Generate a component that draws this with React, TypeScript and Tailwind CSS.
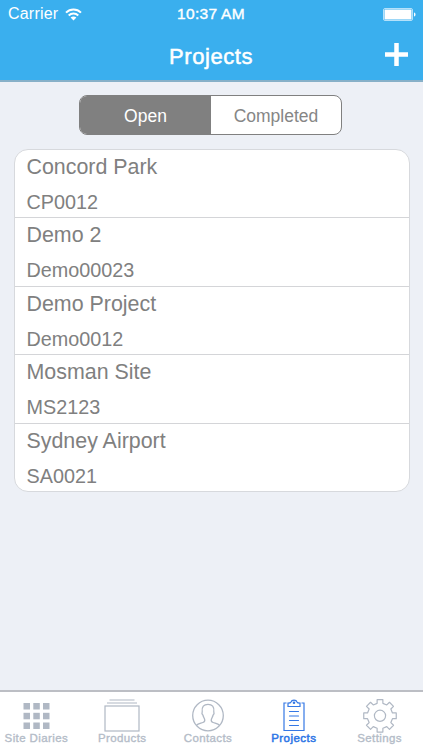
import React from 'react';

const projects = [
    { name: 'Concord Park', code: 'CP0012' },
    { name: 'Demo 2', code: 'Demo00023' },
    { name: 'Demo Project', code: 'Demo0012' },
    { name: 'Mosman Site', code: 'MS2123' },
    { name: 'Sydney Airport', code: 'SA0021' },
];

function StatusBar () {
    return (
        <div className="flex justify-between items-center h-7 pl-2 pr-[7px] text-white">
            <div className="flex items-center w-[140px] gap-[7px]">
                <span className="text-[16px] leading-7 tracking-[0.2px]">Carrier</span>
                <svg width="17" height="13" viewBox="0 0 17 13" fill="none" stroke="currentColor" strokeWidth="2">
                    <path d="M1 4.6C5.2.5 11.8.5 16 4.6" />
                    <path d="M3.7 7.5c2.7-2.6 6.9-2.6 9.6 0" />
                    <path d="M8.5 12.4 5.6 9.5c1.7-1.4 4.1-1.4 5.8 0z" fill="currentColor" stroke="none" />
                </svg>
            </div>
            <span className="mr-0.5 text-[15.5px] leading-7 tracking-[0.3px] [-webkit-text-stroke:0.4px_white]">10:37 AM</span>
            <div className="flex justify-end w-[140px]">
                <svg width="33" height="13" viewBox="0 0 33 13">
                    <rect x="0.5" y="0.5" width="29" height="12" rx="1.5" fill="none" stroke="#b5e1fa" />
                    <rect x="1.5" y="1.5" width="27" height="10" rx="0.5" fill="white" />
                    <path d="M31 4.5c2 .4 2 3.6 0 4z" fill="white" />
                </svg>
            </div>
        </div>
    );
}

function Header () {
    return (
        <header className="h-[82px] shrink-0 bg-[#3aafee] border-b-2 border-[#87b0c8]">
            <StatusBar />
            <div className="flex items-center h-[52px] pr-[15px]">
                <div className="w-[23px] ml-[14px]" />
                <h1 className="grow text-center text-[22px] leading-[52px] pt-[5px] tracking-[0.55px] text-white [-webkit-text-stroke:0.5px_white]">Projects</h1>
                <svg width="23" height="23" viewBox="0 0 23 23" stroke="white" strokeWidth="4.5">
                    <path d="M11.5 0v23M0 11.5h23" />
                </svg>
            </div>
        </header>
    );
}

function GridIcon () {
    return (
        <svg width="36" height="36" viewBox="0 0 36 36" fill="#b0b8c4">
            {[5, 14.8, 24.5].map((y) => [5.5, 15.3, 25].map((x) => (
                <rect key={`${x}-${y}`} x={x} y={y} width="6.5" height="6.5" />
            )))}
        </svg>
    );
}

function ProductsIcon () {
    return (
        <svg width="36" height="36" viewBox="0 0 36 36" fill="none" stroke="#b0b8c4" strokeWidth="1.2">
            <path d="M5.5 2h25M3 5h30" />
            <rect x="1" y="8" width="34" height="25" />
        </svg>
    );
}

function ContactsIcon () {
    return (
        <svg width="36" height="36" viewBox="0 0 36 36" fill="none" stroke="#b0b8c4" strokeWidth="1.3">
            <circle cx="18" cy="17.5" r="15.3" />
            <path d="M6.2 27.4c2-1.6 4.5-2 6.7-2.900 1.900-.8 2.300-1.600 1.700-3.300-.6-1.500-1.400-2.700-1.700-4.200-1-.8-1.100-2.200-.7-3.200-.7-5 1.700-7.500 5.800-7.500s6.500 2.500 5.800 7.500c.4 1 .3 2.400-.7 3.200-.3 1.500-1.100 2.700-1.700 4.200-.6 1.700-.2 2.500 1.700 3.300 2.200.9 4.700 1.300 6.700 2.900" />
        </svg>
    );
}

function ClipboardIcon () {
    return (
        <svg width="36" height="36" viewBox="0 0 36 36" fill="none" stroke="#3578e5" strokeWidth="1.2">
            <path d="M10.5 5H8v27.5h20V5h-2.5" />
            <path d="M12 8.500V5.200c1.500 0 2.700-.2 3-1.200.7-2.600 5.300-2.600 6 0 .3 1 1.500 1.200 3 1.200v3.300z" />
            <circle cx="18" cy="4.800" r=".7" />
            <path d="M13.500 13.500h9M13.500 18h9M13.500 22.500h9M13.500 27.500h9" strokeLinecap="round" />
        </svg>
    );
}

function SettingsIcon () {
    // outline of one tooth, repeated around the wheel as [angle, radius]
    const tooth = [[-13, 12.8], [-10, 16.5], [10, 16.5], [13, 12.8]];
    const points = Array.from({ length: 8 }, (_, i) =>
        tooth.map(([angle, radius]) => {
            const a = ((angle + i * 45) * Math.PI) / 180;
            return `${18 + radius * Math.sin(a)},${17.8 - radius * Math.cos(a)}`;
        }).join(' ')
    ).join(' ');

    return (
        <svg width="36" height="36" viewBox="0 0 36 36" fill="none" stroke="#b0b8c4" strokeWidth="1.2">
            <polygon points={points} strokeLinejoin="round" />
            <circle cx="18" cy="17.8" r="5.6" />
        </svg>
    );
}

const tabs = [
    { label: 'Site Diaries', icon: <GridIcon /> },
    { label: 'Products', icon: <ProductsIcon /> },
    { label: 'Contacts', icon: <ContactsIcon /> },
    { label: 'Projects', icon: <ClipboardIcon />, active: true },
    { label: 'Settings', icon: <SettingsIcon /> },
];

function TabBar () {
    return (
        <nav className="h-[60px] shrink-0 bg-white border-t-2 border-[#bcbec4] overflow-hidden">
            <ul className="grid grid-cols-5 -ml-[6.5px] mr-[0.5px] pt-[6px]">
                {tabs.map((tab) => (
                    <li key={tab.label} className="flex flex-col items-center">
                        {tab.icon}
                        <span className={tab.active
                            ? 'text-[11.5px] leading-[14px] -mt-[3px] tracking-[0.45px] text-[#2e76e6] whitespace-nowrap [-webkit-text-stroke:0.5px_#2e76e6]'
                            : 'text-[11.5px] leading-[14px] -mt-[3px] tracking-[0.4px] text-[#b4bcc8] whitespace-nowrap [-webkit-text-stroke:0.35px_#b4bcc8]'}
                        >
                            {tab.label}
                        </span>
                    </li>
                ))}
            </ul>
        </nav>
    );
}

function App () {
    return (
        <div className="flex flex-col w-[423px] h-[750px] overflow-hidden bg-[#edf0f6] font-['Liberation_Sans',Arial,sans-serif]">
            <Header />
            <main className="grow">
                <div className="flex w-[263px] h-10 mt-[13px] ml-[79px] rounded-[8px] border border-[#808080] bg-white overflow-hidden text-[17.5px] leading-[39px] text-center">
                    <button className="w-[131px] pt-px bg-[#808080] text-white">Open</button>
                    <button className="grow pt-px text-[#868686]">Completed</button>
                </div>
                <ul className="mt-[14px] mx-[13.5px] h-[343px] flex flex-col rounded-[14px] border border-[#d7d9dd] bg-white overflow-hidden text-[#808080]">
                    {projects.map((project) => (
                        <li key={project.code} className="flex-1 pl-3 border-b border-[#d4d5d8] last:border-b-0">
                            <div className="text-[21.4px] leading-[34px] h-[34px]">{project.name}</div>
                            <div className="text-[19.8px] leading-9 h-[33px]">{project.code}</div>
                        </li>
                    ))}
                </ul>
            </main>
            <TabBar />
        </div>
    );
}

export default App;
